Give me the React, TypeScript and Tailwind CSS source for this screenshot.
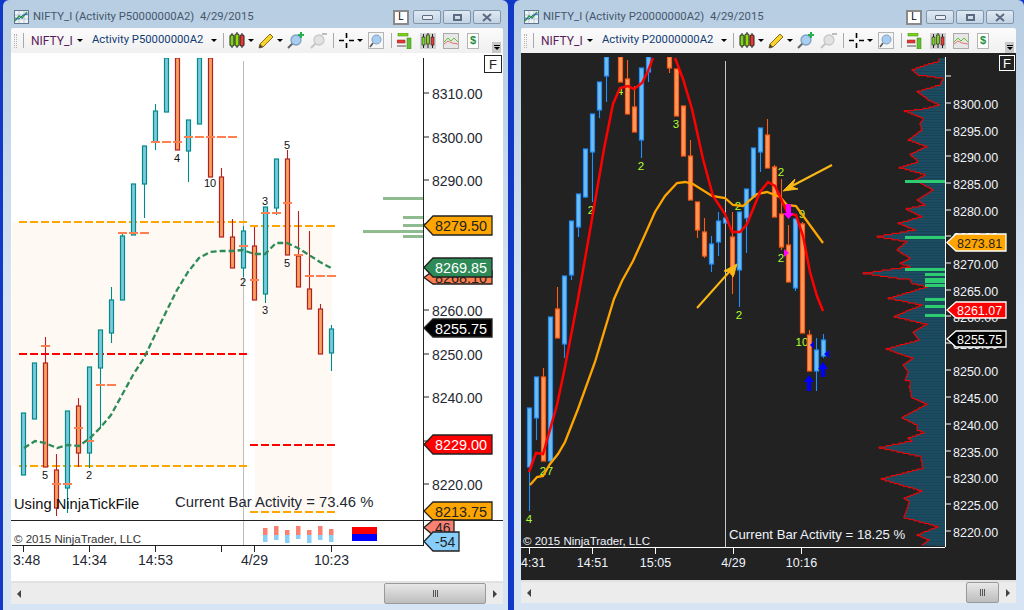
type Candle = [number, number, number, number?, number?];
type Pt = [number, number];

const line = (pts: Pt[]) => pts.map(([x, y], i) => `${i ? "L" : "M"}${x} ${y}`).join(" ");

// k, body top, body bottom, wick top, wick bottom
const leftUp: Candle[] = [
  [0, 413, 475], [1, 363, 419], [4, 411, 488, 411, 513], [6, 367, 453, 367, 468], [7, 330, 368, 330, 428],
  [8, 300, 333, 287, 343], [9, 236, 300, 233, 300], [10, 184, 235], [11, 146, 184, 146, 218],
  [12, 111, 142, 104, 150], [13, 50, 112], [15, 120, 151, 120, 182], [16, 50, 124], [20, 231, 268, 226, 277],
  [22, 207, 294, 207, 303], [23, 159, 208, 159, 215], [28, 329, 353, 325, 371],
];
const leftDown: Candle[] = [
  [2, 363, 467, 337, 467], [3, 470, 508, 454, 516], [5, 406, 453, 398, 467], [14, 50, 150], [17, 50, 177],
  [18, 177, 237, 168, 237], [19, 237, 268, 219, 268], [21, 246, 300, 227, 300], [24, 159, 255, 150, 255],
  [25, 256, 287, 211, 287], [26, 289, 309, 231, 309], [27, 309, 354, 304, 354],
];
const leftDashes: [number, number, number][] = [
  [41, 50, 346], [52, 61, 484], [63, 72, 484], [74, 83, 428], [85, 94, 441], [96, 116, 385], [118, 149, 233],
  [151, 182, 142], [184, 237, 137], [239, 248, 246], [250, 259, 280], [261, 281, 213], [283, 292, 203],
  [294, 303, 255], [305, 336, 276],
];
const leftNumbers: [string, number, number][] = [
  ["4", 177, 162], ["10", 210, 187], ["2", 243, 286], ["3", 265, 205], ["3", 265, 314], ["5", 287, 149],
  ["5", 287, 267], ["5", 45, 479], ["2", 89, 479],
];
const leftEma: Pt[] = [
  [24, 448], [35, 441], [45, 443], [57, 448], [68, 445], [79, 446], [90, 438], [100, 428], [111, 415], [122, 395],
  [133, 375], [144, 358], [155, 335], [166, 312], [177, 290], [188, 272], [199, 258], [210, 252], [221, 251],
  [232, 251], [243, 250], [254, 254], [265, 254], [276, 243], [287, 243], [298, 248], [309, 255], [320, 262], [331, 268],
];
const leftPrices: [string, number][] = [
  ["8310.00", 93], ["8300.00", 137], ["8290.00", 180], ["8260.00", 310], ["8250.00", 354], ["8240.00", 397], ["8220.00", 484],
];
const activity: [number, number, number][] = [
  [265, 528, 542], [276, 526, 540], [287, 530, 543], [298, 526, 539], [309, 530, 543], [320, 526, 540], [331, 529, 542],
];

const rightUp: Candle[] = [
  [0, 409, 468, 409, 512], [1, 378, 419, 378, 441], [3, 318, 462], [5, 277, 345, 277, 359], [6, 222, 276, 222, 281],
  [7, 195, 228, 195, 238], [8, 150, 198, 150, 199], [9, 115, 153, 115, 203], [10, 83, 111, 83, 119], [11, 50, 77, 50, 103],
  [16, 69, 141, 69, 159], [17, 50, 73, 50, 83], [26, 245, 265, 237, 273], [27, 222, 243, 213, 257], [28, 219, 224, 213, 224],
  [30, 213, 271, 213, 308], [31, 190, 219, 190, 254], [32, 149, 198], [33, 129, 153, 129, 173], [38, 220, 289, 220, 292],
  [41, 351, 372, 339, 392], [42, 341, 357, 335, 359],
];
const rightDown: Candle[] = [
  [2, 378, 462, 369, 462], [4, 310, 339, 288, 339], [13, 50, 83], [14, 80, 115, 61, 115], [15, 108, 133, 87, 133],
  [20, 50, 69, 50, 74], [21, 70, 117], [22, 107, 157], [23, 157, 201, 141, 201], [24, 203, 231, 203, 239],
  [25, 233, 257, 219, 259], [29, 238, 275, 213, 295], [34, 136, 169, 120, 169], [35, 168, 218, 166, 218],
  [36, 215, 248, 180, 251], [37, 246, 283, 226, 283], [39, 225, 334, 223, 334], [40, 336, 372, 331, 372],
];
const rightRed: Pt[] = [
  [529, 473], [536, 454], [543, 455], [557, 406], [565, 368], [578, 300], [592, 220], [604, 150], [613, 105], [620, 89],
  [628, 87], [634, 90], [642, 84], [648, 72], [653, 59],
];
const rightRed2: Pt[] = [
  [675, 59], [683, 80], [692, 110], [703, 160], [713, 197], [725, 215], [732, 233], [740, 233], [747, 225], [760, 193],
  [768, 183], [775, 187], [788, 215], [796, 216], [803, 237], [810, 273], [817, 297], [823, 312],
];
const rightOrange: Pt[] = [
  [530, 486], [537, 478], [543, 477], [550, 465], [558, 455], [565, 443], [578, 410], [595, 363], [614, 300], [622, 282],
  [633, 262], [643, 240], [655, 213], [665, 197], [677, 184], [685, 183], [693, 185], [712, 197], [725, 199], [733, 206],
  [743, 207], [757, 195], [767, 193], [780, 198], [787, 206], [796, 207], [823, 244],
];
const rightNumbers: [string, number, number][] = [
  ["2", 591, 215], ["4", 620, 96], ["3", 676, 129], ["2", 641, 171], ["2", 738, 211], ["2", 781, 177], ["2", 781, 263],
  ["2", 739, 320], ["10", 802, 347], ["9", 802, 219], ["2", 543, 476], ["7", 550, 476], ["4", 529, 524],
];
const rightPrices: [string, number][] = [
  ["8300.00", 104], ["8295.00", 131], ["8290.00", 157], ["8285.00", 184], ["8280.00", 211], ["8275.00", 237],
  ["8270.00", 264], ["8265.00", 291], ["8260.00", 317], ["8255.00", 344], ["8250.00", 371], ["8245.00", 398],
  ["8240.00", 425], ["8235.00", 452], ["8230.00", 478], ["8225.00", 505], ["8220.00", 532],
];
const rightBars: [number, number, number][] = [
  [905, 181, 3], [905, 237, 3], [905, 269, 3], [925, 274, 3], [925, 279, 5], [925, 285, 3], [925, 299, 3], [925, 306, 3], [925, 315, 3],
];
// read off the reference: x = 860 + x/3, y = 50 + y/3
const profileRaw: Pt[] = [
  [238, 28], [235, 40], [205, 48], [157, 65], [175, 80], [250, 90], [240, 110], [172, 130], [205, 155], [238, 170], [190, 182],
  [133, 188], [190, 210], [180, 225], [185, 245], [145, 275], [200, 295], [150, 318], [175, 340], [118, 358], [180, 375], [195, 380],
  [165, 395], [220, 425], [170, 455], [195, 470], [137, 482], [185, 505], [115, 525], [165, 545], [50, 565], [140, 580], [110, 605],
  [150, 630], [120, 645], [150, 655], [10, 675], [110, 690], [150, 695], [155, 705], [205, 715], [85, 750], [185, 770], [102, 805],
  [200, 828], [158, 852], [178, 875], [78, 902], [158, 930], [128, 950], [145, 970], [135, 995], [150, 1000],
  [148, 1015], [155, 1048], [200, 1068], [125, 1108], [170, 1130], [172, 1145], [192, 1153], [145, 1170], [155, 1178], [58, 1198],
  [182, 1225], [188, 1260], [62, 1292], [185, 1328], [133, 1350], [148, 1360], [132, 1408], [235, 1435], [172, 1460], [208, 1475], [180, 1493],
];

// red outline of the volume profile comes in little pixel stairs
const profilePts: Pt[] = (() => {
  const out: Pt[] = [];
  const pts = profileRaw.map(([x, y]): Pt => [860 + x / 3, 50 + y / 3]);
  for (let i = 0; i < pts.length - 1; i++) {
    const [x0, y0] = pts[i];
    const [x1, y1] = pts[i + 1];
    const n = Math.max(1, Math.round((y1 - y0) / 1.33));
    for (let j = 0; j < n; j++) {
      const x = Math.round(x0 + ((x1 - x0) * j) / n);
      const y = y0 + ((y1 - y0) * j) / n;
      if (out.length) out.push([x, out[out.length - 1][1]]);
      out.push([x, y]);
    }
  }
  return out;
})();

const Candles = ({ data, x0, step, stroke, fill, top }: { data: Candle[]; x0: number; step: number; stroke: string; fill: string; top: number }) => (
  <g>
    {data.map(([k, a, b, wt, wb]) => {
      const c = Math.floor(x0 + step * k) + 0.5;
      const y = Math.max(a, top);
      return (
        <g key={k}>
          {wt !== undefined && wb !== undefined && <line x1={c} x2={c} y1={Math.max(wt, top)} y2={wb} stroke={stroke} strokeWidth={1.1} />}
          <rect x={c - 2} y={y} width={4} height={b - y} fill={fill} stroke={stroke} strokeWidth={1.2} />
        </g>
      );
    })}
  </g>
);

const Tag = ({ x, r, y, b, fill, stroke, text, color, size, tx }: { x: number; r: number; y: number; b: number; fill: string; stroke: string; text: string; color: string; size: number; tx: number }) => (
  <g>
    <polygon points={`${x},${(y + b) / 2} ${x + 9},${y} ${r},${y} ${r},${b} ${x + 9},${b}`} fill={fill} stroke={stroke} strokeWidth={1.3} />
    <text x={tx} y={(y + b) / 2 + size * 0.4} fontSize={size} fill={color}>{text}</text>
  </g>
);

const LeftChart = () => (
  <svg viewBox="11 53 492 528" className="block w-[492px] h-[528px] bg-white font-['Liberation_Sans',Arial,sans-serif]">
    <defs>
      <clipPath id="leftPlot"><rect x="11" y="58" width="492" height="470" /></clipPath>
    </defs>
    <rect x="12" y="222" width="231" height="244" fill="#fef9f3" />
    <rect x="255" y="226" width="77" height="286" fill="#fef9f3" />
    <line x1="243.5" x2="243.5" y1="61" y2="546" stroke="#bdbdbd" />

    <g strokeDasharray="8 3" strokeWidth="2">
      <line x1="19" x2="248" y1="222" y2="222" stroke="#ffa500" />
      <line x1="250" x2="336" y1="226" y2="226" stroke="#ffa500" />
      <line x1="19" x2="248" y1="466" y2="466" stroke="#ffa500" />
      <line x1="250" x2="336" y1="512" y2="512" stroke="#ffa500" />
      <line x1="19" x2="248" y1="354" y2="354" stroke="#ff0000" />
      <line x1="250" x2="336" y1="445" y2="445" stroke="#ff0000" />
    </g>

    <g clipPath="url(#leftPlot)">
      <Candles data={leftUp} x0={23} step={11} stroke="#008b8b" fill="#7ec8dc" top={58} />
      <Candles data={leftDown} x0={23} step={11} stroke="#b22222" fill="#f4a460" top={58} />
    </g>
    {leftDashes.map(([a, b, y], i) => (
      <line key={i} x1={a} x2={b} y1={y} y2={y} stroke="#ff7f50" strokeWidth={2} strokeDasharray="9 2" />
    ))}
    <path d={line(leftEma)} fill="none" stroke="#2e8b57" strokeWidth={2.3} strokeDasharray="6 3" />
    {leftNumbers.map(([t, x, y], i) => (
      <text key={i} x={x} y={y} fontSize={11} textAnchor="middle" fill="#111">{t}</text>
    ))}

    <g fill="#8fbc8f">
      <rect x="383" y="197" width="40" height="3" />
      <rect x="403" y="216" width="20" height="3" />
      <rect x="403" y="224" width="20" height="3" />
      <rect x="363" y="230" width="60" height="3" />
      <rect x="403" y="235" width="20" height="3" />
    </g>

    <line x1="423.5" x2="423.5" y1="58" y2="546" stroke="#222" />
    {[93, 137, 180, 224, 267, 310, 354, 397, 441, 484].map((y) => (
      <line key={y} x1="423" x2="429" y1={y} y2={y} stroke="#222" />
    ))}
    {leftPrices.map(([t, y]) => (
      <text key={t} x={432} y={y + 6} fontSize={14} fill="#1f2933">{t}</text>
    ))}

    <Tag x={424} r={492} y={271} b={284} fill="#ff7f50" stroke="#222" text="8268.10" color="#222" size={14.4} tx={435} />
    <Tag x={424} r={492} y={216} b={235} fill="#ffa500" stroke="#222" text="8279.50" color="#222" size={14.4} tx={435} />
    <Tag x={424} r={492} y={258} b={277} fill="#2e8b57" stroke="#222" text="8269.85" color="#fff" size={14.4} tx={435} />
    <Tag x={424} r={492} y={319} b={337} fill="#000" stroke="#222" text="8255.75" color="#fff" size={14.4} tx={435} />
    <Tag x={424} r={492} y={435} b={454} fill="#ff0000" stroke="#222" text="8229.00" color="#fff" size={14.4} tx={435} />
    <Tag x={424} r={492} y={502} b={520} fill="#ffa500" stroke="#222" text="8213.75" color="#222" size={14.4} tx={435} />

    <text x={14} y={509} fontSize={14.7} fill="#111">Using NinjaTickFile</text>
    <text x={175} y={507} fontSize={14.85} fill="#1f2933">Current Bar Activity = 73.46 %</text>

    <line x1="11" x2="503" y1="520.5" y2="520.5" stroke="#222" />
    {activity.map(([c, t, b]) => (
      <g key={c}>
        <rect x={c - 2} y={t} width={4.5} height={535 - t} fill="#fa8072" />
        <rect x={c - 2} y={535} width={4.5} height={b - 535} fill="#87cefa" />
      </g>
    ))}
    <rect x="352" y="527" width="25" height="7" fill="#ff0000" />
    <rect x="352" y="534" width="25" height="7" fill="#0000ff" />
    <text x={14} y={543} fontSize={11.5} fill="#333">© 2015 NinjaTrader, LLC</text>

    <Tag x={424} r={454} y={520} b={535} fill="#fa8072" stroke="#222" text="46" color="#222" size={14} tx={435} />
    <Tag x={424} r={459} y={532} b={551} fill="#87cefa" stroke="#222" text="-54" color="#222" size={14} tx={435} />

    <line x1="12" x2="423" y1="545.5" y2="545.5" stroke="#222" />
    {[23.5, 89.5, 155.5, 221.5, 254.5, 331.5].map((x) => (
      <line key={x} x1={x} x2={x} y1="545" y2="552" stroke="#222" />
    ))}
    <text x={13} y={565} fontSize={14} fill="#1f2933">3:48</text>
    <text x={89.5} y={565} fontSize={14} textAnchor="middle" fill="#1f2933">14:34</text>
    <text x={155.5} y={565} fontSize={14} textAnchor="middle" fill="#1f2933">14:53</text>
    <text x={254.5} y={565} fontSize={14} textAnchor="middle" fill="#1f2933">4/29</text>
    <text x={331.5} y={565} fontSize={14} textAnchor="middle" fill="#1f2933">10:23</text>

    <rect x="484.5" y="55.5" width="17" height="17" fill="#fff" stroke="#222" />
    <text x={493} y={69} fontSize={13} textAnchor="middle" fill="#222">F</text>
  </svg>
);

const RightChart = () => (
  <svg viewBox="521 54 495 527" className="block w-[495px] h-[527px] bg-[#222222] font-['Liberation_Sans',Arial,sans-serif]">
    <defs>
      <clipPath id="rightPlot"><rect x="521" y="58" width="424" height="490" /></clipPath>
      <pattern id="stripes" width="6" height="2.67" patternUnits="userSpaceOnUse">
        <rect width="6" height="2.67" fill="#1c4d63" />
        <rect width="6" height="0.7" fill="#153e50" />
      </pattern>
    </defs>

    <line x1="725.5" x2="725.5" y1="62" y2="548" stroke="#c8c8c8" />
    <polygon points={`945,59 ${profilePts.map(([x, y]) => `${x},${y}`).join(" ")} 945,547`} fill="url(#stripes)" />
    <path d={line(profilePts)} fill="none" stroke="#ff0000" strokeWidth={1} />
    {rightBars.map(([x, y, h]) => (
      <rect key={y} x={x} y={y} width={945 - x} height={h} fill="#2ecc71" />
    ))}

    {rightNumbers.map(([t, x, y], i) => (
      <text key={i} x={x} y={y} fontSize={11.5} textAnchor="middle" fill="#adff2f">{t}</text>
    ))}
    <g clipPath="url(#rightPlot)">
      <Candles data={rightUp} x0={529.3} step={7} stroke="#1e90ff" fill="#72bcee" top={58} />
      <Candles data={rightDown} x0={529.3} step={7} stroke="#ff5a14" fill="#ff9a5c" top={58} />
      <path d={line(rightOrange)} fill="none" stroke="#ffa500" strokeWidth={2.3} />
      <path d={line(rightRed)} fill="none" stroke="#ff0000" strokeWidth={2.5} />
      <path d={line(rightRed2)} fill="none" stroke="#ff0000" strokeWidth={2.5} />
    </g>

    <g fill="#fbb917" stroke="#fbb917">
      <line x1="832" y1="166" x2="790" y2="188" strokeWidth={2} />
      <polygon points="783,192 795,180 792,188 798,190" strokeWidth={1} />
      <line x1="697" y1="309" x2="730" y2="272" strokeWidth={2} />
      <polygon points="737,265 733,278 730,273 724,272" strokeWidth={1} />
    </g>
    <polygon points="786,205 791,205 791,214 794,214 788.5,220 783,214 786,214" fill="#ff00ff" />
    <polygon points="784,250 789,254 784,258" fill="#ff00ff" />
    <polygon points="807,392 811,392 811,383 814,383 809,376 804,383 807,383" fill="#0000ff" />
    <polygon points="821,378 825,378 825,370 828,370 823,363 818,370 821,370" fill="#0000ff" />
    <polygon points="814,342 814,350 810,346" fill="#0000ff" />
    <polygon points="829,351 829,359 824,355" fill="#0000ff" />

    <line x1="945.5" x2="945.5" y1="58" y2="548" stroke="#fff" />
    <line x1="945" x2="951" y1="77" y2="77" stroke="#fff" />
    {rightPrices.map(([t, y]) => (
      <g key={t}>
        <line x1="945" x2="951" y1={y} y2={y} stroke="#fff" />
        <text x={953} y={y + 5.5} fontSize={12.5} fill="#eef4fb">{t}</text>
      </g>
    ))}
    <Tag x={947} r={1006} y={235} b={252} fill="#ffa500" stroke="#fff" text="8273.81" color="#222" size={12.5} tx={957} />
    <Tag x={947} r={1006} y={303} b={319} fill="#ff0000" stroke="#fff" text="8261.07" color="#fff" size={12.5} tx={957} />
    <Tag x={947} r={1006} y={332} b={348} fill="#000" stroke="#fff" text="8255.75" color="#fff" size={12.5} tx={957} />

    <text x={729} y={540} fontSize={13.2} fill="#eef4fb">Current Bar Activity = 18.25 %</text>
    <text x={523} y={546} fontSize={11.5} fill="#eef4fb">© 2015 NinjaTrader, LLC</text>

    <line x1="521" x2="945" y1="548.5" y2="548.5" stroke="#fff" />
    {[529.5, 592.5, 655.5, 733.5, 801.5].map((x) => (
      <line key={x} x1={x} x2={x} y1="548" y2="555" stroke="#fff" />
    ))}
    <text x={521} y={568} fontSize={12.5} fill="#eef4fb">4:31</text>
    <text x={592.5} y={568} fontSize={12.5} textAnchor="middle" fill="#eef4fb">14:51</text>
    <text x={655.5} y={568} fontSize={12.5} textAnchor="middle" fill="#eef4fb">15:05</text>
    <text x={733.5} y={568} fontSize={12.5} textAnchor="middle" fill="#eef4fb">4/29</text>
    <text x={801.5} y={568} fontSize={12.5} textAnchor="middle" fill="#eef4fb">10:16</text>

    <rect x="999.5" y="56.5" width="15" height="15" fill="#222" stroke="#fff" />
    <text x={1007} y={69} fontSize={13} textAnchor="middle" fill="#fff">F</text>
  </svg>
);

const Caret = () => <span className="block w-0 h-0 border-x-[3px] border-x-transparent border-t-[3px] border-t-black" />;
const Sep = () => <span className="block w-px h-[15px] bg-[#a9a9a9]" />;

const TitleIcon = () => (
  <svg width="15" height="14" viewBox="0 0 15 14">
    <rect x="0.5" y="0.5" width="14" height="13" fill="#eef3f8" stroke="#60768c" />
    <path d="M1 5H14M1 9H14M5 1V13M10 1V13" stroke="#9fb0c2" strokeWidth="0.6" />
    <path d="M1 11L5 6L8 8L13 2" fill="none" stroke="#2e9e3a" strokeWidth="1.5" />
    <path d="M1 8L5 9L9 5L14 4" fill="none" stroke="#2f62c0" strokeWidth="1" />
  </svg>
);
const CandlesIcon = () => (
  <svg width="16" height="17" viewBox="0 0 16 17">
    <path d="M3 1V16M8 0V16M13 1V16" stroke="#222" />
    <rect x="1" y="3" width="4" height="11" rx="1" fill="#7ed321" stroke="#222" />
    <rect x="6" y="2" width="4" height="12" rx="1" fill="#8fe000" stroke="#222" />
    <rect x="11" y="3" width="4" height="11" rx="1" fill="#e53935" stroke="#222" />
  </svg>
);
const PencilIcon = () => (
  <svg width="16" height="16" viewBox="0 0 16 16">
    <path d="M12 1L15 4L5 14L1 15L2 11Z" fill="#f8d42a" stroke="#8a6d1c" />
    <path d="M2 11L5 14L1 15Z" fill="#444" />
  </svg>
);
const LensIcon = ({ muted, plus }: { muted?: boolean; plus?: boolean }) => (
  <svg width="17" height="17" viewBox="0 0 17 17">
    <path d="M1 16L6 11" stroke={muted ? "#c4c4c4" : "#666"} strokeWidth="2" />
    <circle cx="9" cy="8" r="5" fill={muted ? "#e2e2e2" : "#a8cdf0"} stroke={muted ? "#c8c8c8" : "#7f9fbf"} strokeWidth="1.3" />
    {plus && <path d="M14 0V6M11 3H17" stroke="#22b14c" strokeWidth="2" />}
    {muted && <path d="M12 2H17" stroke="#bdbdbd" strokeWidth="2" />}
  </svg>
);
const CrossIcon = () => (
  <svg width="15" height="15" viewBox="0 0 15 15">
    <path d="M7.5 0V5M7.5 10V15M0 7.5H5M10 7.5H15" stroke="#000" strokeWidth="1.6" />
  </svg>
);
const BoxLensIcon = () => (
  <svg width="16" height="17" viewBox="0 0 16 17">
    <rect x="0.5" y="0.5" width="15" height="16" fill="#f5f5f5" stroke="#b5b5b5" />
    <path d="M2 15L5 11" stroke="#555" strokeWidth="1.6" />
    <circle cx="8.5" cy="7.5" r="4.5" fill="#a8cdf0" stroke="#7f9fbf" />
  </svg>
);
const BarsIcon = () => (
  <svg width="16" height="16" viewBox="0 0 16 16">
    <rect x="1" y="0" width="10" height="3" fill="#7ed321" stroke="#3d7a10" strokeWidth="0.5" />
    <rect x="0" y="7" width="8" height="3" fill="#e53935" stroke="#8a1f1c" strokeWidth="0.5" />
    <rect x="10" y="5" width="4" height="11" fill="#5cc22e" stroke="#3d7a10" strokeWidth="0.5" />
    <path d="M0 13H9" stroke="#555" />
  </svg>
);
const BoxCandlesIcon = () => (
  <svg width="16" height="16" viewBox="0 0 16 16">
    <rect width="16" height="16" fill="#d2d2d2" />
    <path d="M3.5 1V15M8 0V15M12.5 1V15" stroke="#222" />
    <rect x="2" y="4" width="3" height="8" fill="#7ed321" stroke="#222" strokeWidth="0.6" />
    <rect x="6.5" y="2" width="3" height="9" fill="#7ed321" stroke="#222" strokeWidth="0.6" />
    <rect x="11" y="4" width="3" height="8" fill="#e53935" stroke="#222" strokeWidth="0.6" />
  </svg>
);
const BoxLineIcon = () => (
  <svg width="16" height="16" viewBox="0 0 16 16">
    <rect x="0.5" y="0.5" width="15" height="15" fill="#e6e6e6" stroke="#aaa" />
    <path d="M1 9L5 5L8 8L11 5L15 9" fill="none" stroke="#5cc22e" />
    <path d="M1 11L5 8L9 10L15 11" fill="none" stroke="#e57373" />
  </svg>
);
const DollarIcon = () => (
  <span className="w-[12px] h-[16px] flex items-center justify-center bg-white border border-[#b5b5b5] text-[11px] leading-none font-bold text-[#1f8f3a] font-['Liberation_Sans',Arial,sans-serif]">$</span>
);

const WinButton = ({ children }: { children?: React.ReactNode }) => (
  <div className="w-[28px] h-[14px] rounded-[2px] border border-[#8196ab] bg-gradient-to-b from-[#dfe9f3] to-[#c3d3e3] flex items-center justify-center">{children}</div>
);

const TitleBar = ({ name }: { name: string }) => (
  <div className="h-[28px] pt-[6px] flex items-center pl-[3px] pr-[2px] text-[#46576b] text-[11.3px] font-['Roboto',sans-serif]">
    <TitleIcon />
    <span className="ml-[4px] whitespace-pre">{`NIFTY_I (Activity ${name})  4/29/2015`}</span>
    <div className="ml-auto flex items-center gap-[2px]">
      <div className="w-[16px] h-[15px] mr-[2px] bg-white border-2 border-[#8a8a8a] flex items-center justify-center text-[10px] leading-none text-black">L</div>
      <WinButton><span className="w-[11px] h-[5px] border border-[#5a6a80] bg-[#e8eef5] rounded-[1px]" /></WinButton>
      <WinButton><span className="w-[9px] h-[7px] border-2 border-[#5a6a80]" /></WinButton>
      <WinButton>
        <svg width="12" height="9" viewBox="0 0 12 9"><path d="M2 1L10 8M10 1L2 8" stroke="#5a6a80" strokeWidth="2" /></svg>
      </WinButton>
    </div>
  </div>
);

const Toolbar = ({ name }: { name: string }) => (
  <div className="h-[25px] flex items-center bg-gradient-to-b from-[#fbfbfb] to-[#f0f0f0] rounded-t-[2px] text-[12px] font-['Roboto',sans-serif]">
    <span className="ml-[3px] w-[3px] h-[14px] border-x border-dotted border-[#b5b5b5]" />
    <span className="ml-[6px]"><Sep /></span>
    <span className="ml-[7px] w-[40px] whitespace-nowrap text-[#5b1a5e]">NIFTY_I</span>
    <span className="ml-[6px]"><Caret /></span>
    <span className="ml-[9px] text-[#123c74] text-[11.3px] w-[113px] whitespace-nowrap">{`Activity ${name}`}</span>
    <span className="ml-[6px]"><Caret /></span>
    <span className="ml-[6px]"><Sep /></span>
    <div className="ml-[5px] flex items-center gap-[3px]"><CandlesIcon /><Caret /></div>
    <div className="ml-[4px] flex items-center gap-[3px]"><PencilIcon /><Caret /></div>
    <div className="ml-[4px]"><LensIcon plus /></div>
    <div className="ml-[6px]"><LensIcon muted /></div>
    <span className="ml-[6px]"><Sep /></span>
    <div className="ml-[5px] flex items-center gap-[3px]"><CrossIcon /><Caret /></div>
    <div className="ml-[5px]"><BoxLensIcon /></div>
    <span className="ml-[7px]"><Sep /></span>
    <div className="ml-[5px]"><BarsIcon /></div>
    <div className="ml-[7px]"><BoxCandlesIcon /></div>
    <div className="ml-[7px]"><BoxLineIcon /></div>
    <div className="ml-[8px]"><DollarIcon /></div>
    <div className="ml-auto mr-[2px] self-end w-[9px] h-[11px] bg-[#c8c8c8] flex flex-col items-center justify-center gap-[1px]">
      <span className="w-[6px] h-px bg-black" />
      <Caret />
    </div>
  </div>
);

const ScrollBar = ({ thumb, pad }: { thumb: string; pad: string }) => (
  <div className="h-[23px] flex items-center bg-[#ececec] border-t-2 border-[#e2e2e2] text-[#444]">
    <span className="ml-[6px] w-0 h-0 border-y-[4px] border-y-transparent border-r-[4px] border-r-[#444]" />
    <div className={`ml-auto h-[21px] ${thumb} rounded-[2px] border border-[#9a9a9a] bg-gradient-to-b from-[#e8e8e8] to-[#bdbdbd] flex items-center justify-center gap-px`}>
      <span className="w-px h-[7px] bg-[#555]" />
      <span className="w-px h-[7px] bg-[#555]" />
      <span className="w-px h-[7px] bg-[#555]" />
    </div>
    <span className={`${pad} mr-[6px] w-0 h-0 border-y-[4px] border-y-transparent border-l-[4px] border-l-[#444]`} />
  </div>
);

const App = () => {
  return (
    <div className="w-[1024px] h-[610px] overflow-hidden flex bg-[#1238c8] pl-[3px] gap-[6px]">
      {/* left window */}
      <div className="w-[505px] h-[610px] rounded-t-[6px] bg-gradient-to-b from-[#b7cde2] via-[#d6e4f3] to-[#d6e4f3] pl-[8px] pr-[5px] flex flex-col">
        <TitleBar name="P50000000A2" />
        <Toolbar name="P50000000A2" />
        <LeftChart />
        <ScrollBar thumb="w-[102px]" pad="ml-[7px]" />
      </div>
      {/* right window */}
      <div className="w-[510px] h-[610px] rounded-t-[6px] bg-gradient-to-b from-[#b7cde2] via-[#d6e4f3] to-[#d6e4f3] pl-[7px] pr-[8px] flex flex-col">
        <TitleBar name="P20000000A2" />
        <Toolbar name="P20000000A2" />
        <RightChart />
        <ScrollBar thumb="w-[33px]" pad="ml-[7px]" />
      </div>
    </div>
  );
};

export default App;
